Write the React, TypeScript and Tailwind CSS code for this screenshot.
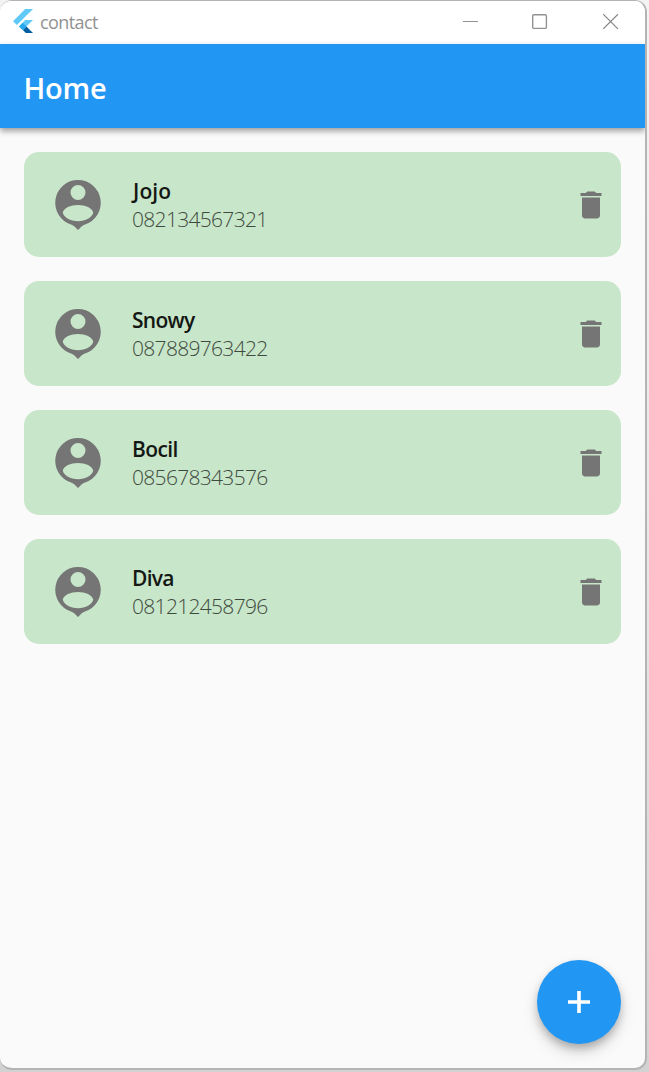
import React from "react";

const contacts = [
  { name: "Jojo", phone: "082134567321", tracking: "tracking-[0.1px] pl-px" },
  { name: "Snowy", phone: "087889763422", tracking: "tracking-[-0.7px]" },
  { name: "Bocil", phone: "085678343576", tracking: "tracking-[-0.6px]" },
  { name: "Diva", phone: "081212458796", tracking: "tracking-[-0.7px]" },
];

function FlutterLogo() {
  return (
    <svg className="h-6 w-5 shrink-0" viewBox="0 0 20 24">
      <path d="M12.2 0H20L3.9 16.1 0 12.2z" fill="#5fcaf8" />
      <path d="M12.2 11.1H20L13.4 17.6 9.9 21.1 6 17.6z" fill="#5fcaf8" />
      <path d="M9.9 21.1l3.5-3.5L20 24h-7.2z" fill="#035da1" />
      <path d="M6 17.6l3.7-3.8 3.8 3.8-3.6 3.7z" fill="#27a8ec" />
    </svg>
  );
}

function PersonPin() {
  return (
    <svg className="h-[60px] w-[60px] shrink-0" viewBox="0 0 24 24" fill="#757575">
      <path
        fillRule="evenodd"
        d="M12 2a9.1 9.1 0 0 0-2.8 17.76c.75.24 1.2.64 1.6 1.04L12 22l1.2-1.2c.4-.4.85-.8 1.6-1.04A9.1 9.1 0 0 0 12 2zm0 2a3 3 0 1 1 0 6 3 3 0 0 1 0-6zm0 8c3 0 5.7 1.2 6.1 3-.5 2.1-3 3.45-6.1 3.45S6.400 17.1 5.900 15C6.300 13.200 9 12 12 12z"
      />
    </svg>
  );
}

function TrashIcon() {
  return (
    <svg className="h-9 w-9" viewBox="0 0 24 24" fill="#757575">
      <path d="M6 19c0 1.1.9 2 2 2h8c1.1 0 2-.9 2-2V7H6v12zM19 4h-3.5l-1-1h-5l-1 1H5v2h14V4z" />
    </svg>
  );
}

function TitleBar() {
  return (
    <div className="flex h-[43px] shrink-0 items-start bg-white">
      <div className="flex grow items-start pl-[13px] pt-2">
        <FlutterLogo />
        <span className="ml-[7px] text-[18px] leading-[27px] tracking-[-0.6px] text-[#929292]">contact</span>
      </div>
      <div className="flex items-start pr-[26px] pt-[13px]">
        <svg className="h-4 w-4" viewBox="0 0 16 16" stroke="#929292" fill="none">
          <path d="M0 7.5h15" />
        </svg>
        <svg className="ml-[53px] h-4 w-4" viewBox="0 0 16 16" stroke="#929292" strokeWidth="1.4" fill="none">
          <rect x="0.7" y="0.7" width="13.7" height="13.7" rx="1.2" />
        </svg>
        <svg className="ml-[55px] h-4 w-4" viewBox="0 0 16 16" stroke="#858585" strokeWidth="1.2" fill="none">
          <path d="M.3.3l14.6 14.6M14.9.3L.3 14.9" />
        </svg>
      </div>
    </div>
  );
}

export default function App() {
  return (
    <div className="h-[1072px] w-[649px] overflow-hidden bg-gradient-to-b from-[#f3f3f3] via-[#e8e8e8] to-[#d2d2d2] font-['Open_Sans','Noto_Sans',sans-serif]">
      <div className="relative flex h-[1070px] w-[647px] flex-col overflow-hidden rounded-[12px] border-b-2 border-r-2 border-t border-[#b4b4b4] bg-[#fafafa]">
        <TitleBar />
        <header className="z-10 flex h-[84px] shrink-0 items-center bg-[#2196f3] pl-[23.5px] pt-[3px] shadow-[0_3px_6px_rgba(0,0,0,0.38)]">
          <h1 className="text-[29px] font-semibold leading-10 tracking-[-0.2px] text-white">Home</h1>
        </header>
        <main className="flex flex-col gap-6 p-6">
          {contacts.map((c) => (
            <div key={c.name} className="flex h-[105px] items-center rounded-[15px] bg-[#c8e6c9] pl-6 pr-3">
              <PersonPin />
              <div className="ml-6 grow">
                <div className={`text-[21px] font-semibold leading-7 text-[#141714] ${c.tracking}`}>{c.name}</div>
                <div className="text-[21px] font-light leading-7 tracking-[-0.69px] text-[#3f4a3f]">{c.phone}</div>
              </div>
              <button aria-label="Delete">
                <TrashIcon />
              </button>
            </div>
          ))}
        </main>
        <button
          aria-label="Add"
          className="absolute bottom-6 right-6 flex h-[84px] w-[84px] items-center justify-center rounded-full bg-[#2196f3] shadow-[0_5px_8px_-1px_rgba(0,0,0,0.24),0_8px_16px_rgba(0,0,0,0.14)]"
        >
          <svg className="h-9 w-9" viewBox="0 0 36 36" stroke="#fff" strokeWidth="3.6">
            <path d="M7 18h22M18 7v22" />
          </svg>
        </button>
      </div>
    </div>
  );
}
